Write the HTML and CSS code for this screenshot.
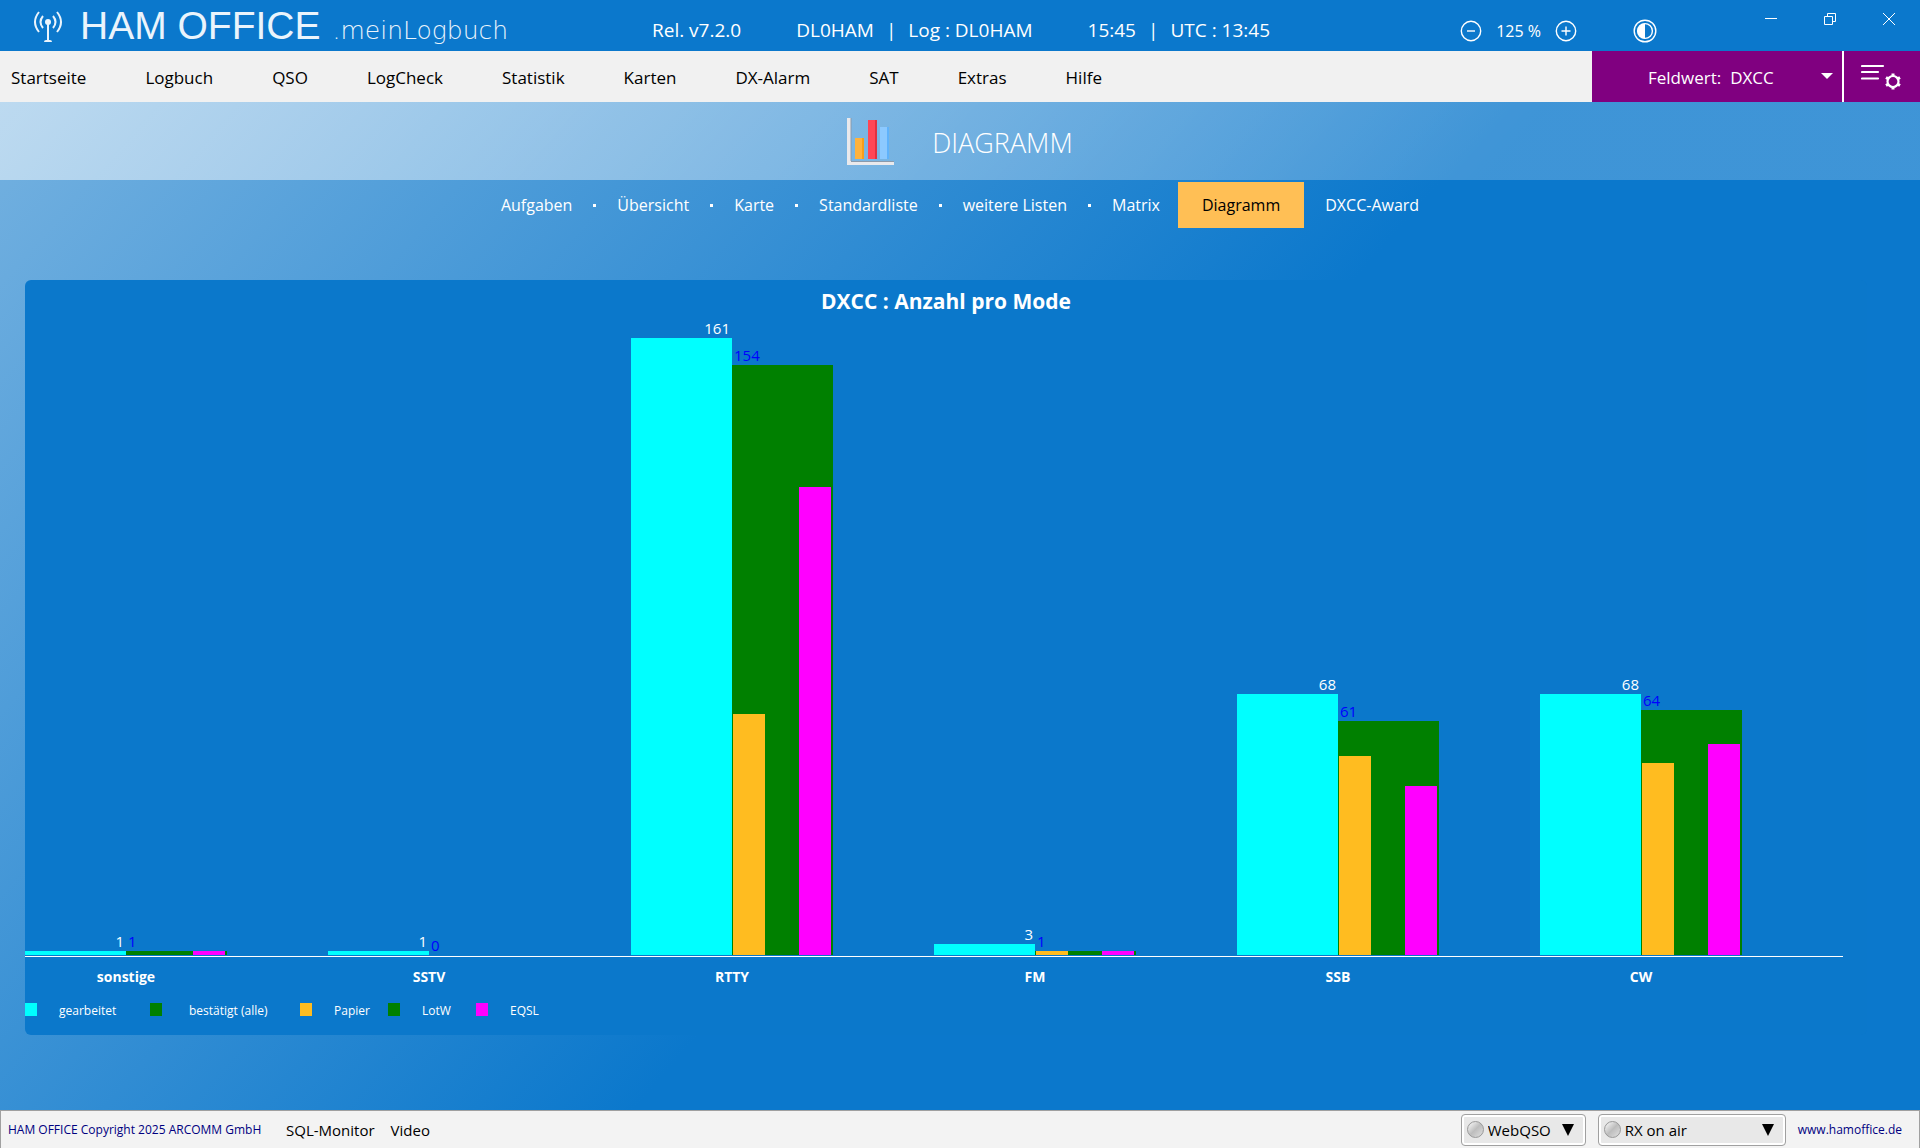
FILE: index.html
```html
<!DOCTYPE html>
<html lang="de">
<head>
<meta charset="utf-8">
<title>HAM OFFICE .meinLogbuch – Diagramm</title>
<meta name="viewport" content="width=device-width, initial-scale=1">
<link rel="stylesheet" href="styles.css">
</head>
<body>
<header class="topbar">
  <div class="brand">
    <svg class="brand-icon" viewBox="0 0 30 32" aria-hidden="true">
      <g fill="none" stroke="#eaf4fc" stroke-width="2">
        <path d="M6 1 Q-2 11 6 21"/>
        <path d="M10 5 Q5 11 10 17"/>
        <path d="M20 5 Q25 11 20 17"/>
        <path d="M24 1 Q32 11 24 21"/>
        <path d="M15 11 V29"/>
      </g>
      <circle cx="15" cy="11" r="3" fill="#eaf4fc"/>
      <path d="M11 31 Q11 29 13 29 H17 Q19 29 19 31 Z" fill="#eaf4fc"/>
    </svg>
    <span class="brand-name">HAM OFFICE</span>
    <span class="brand-sub">.meinLogbuch</span>
  </div>
  <div class="info">
    <span>Rel. v7.2.0</span>
    <span class="info-pair"><span>DL0HAM</span><span>|</span><span>Log : DL0HAM</span></span>
    <span class="info-pair"><span>15:45</span><span>|</span><span>UTC : 13:45</span></span>
  </div>
  <div class="tools">
    <div class="zoom">
      <button class="icon-btn" aria-label="Verkleinern"><svg width="22" height="22" viewBox="0 0 22 22" fill="none" stroke="#fff" stroke-width="1.4"><circle cx="11" cy="11" r="9.7"/><path d="M7 11h8"/></svg></button>
      <span>125 %</span>
      <button class="icon-btn" aria-label="Vergrößern"><svg width="22" height="22" viewBox="0 0 22 22" fill="none" stroke="#fff" stroke-width="1.4"><circle cx="11" cy="11" r="9.7"/><path d="M6.500 11h9M11 6.500v9"/></svg></button>
    </div>
    <button class="icon-btn" aria-label="Kontrast"><svg width="24" height="24" viewBox="0 0 24 24"><circle cx="12" cy="12" r="10.8" fill="none" stroke="#fff" stroke-width="1.4"/><circle cx="12" cy="12" r="7.4" fill="none" stroke="#fff" stroke-width="1.4"/><path d="M12 4.500a7.500 7.500 0 0 0 0 15z" fill="#fff"/></svg></button>
  </div>
  <div class="window-buttons">
    <button class="icon-btn" aria-label="Minimieren"><svg width="12" height="12" viewBox="0 0 12 12"><path d="M0 5.500h12" stroke="#fff"/></svg></button>
    <button class="icon-btn" aria-label="Wiederherstellen"><svg width="12" height="12" viewBox="0 0 12 12" fill="none" stroke="#fff"><path d="M.5 3.500h8v8h-8zM3.500 3.500v-3h8v8h-3"/></svg></button>
    <button class="icon-btn" aria-label="Schließen"><svg width="12" height="12" viewBox="0 0 12 12"><path d="M0 0l12 12M12 0L0 12" stroke="#fff"/></svg></button>
  </div>
</header>

<div class="menubar">
  <nav class="menu">
    <a href="#">Startseite</a><a href="#">Logbuch</a><a href="#">QSO</a><a href="#">LogCheck</a><a href="#">Statistik</a><a href="#">Karten</a><a href="#">DX-Alarm</a><a href="#">SAT</a><a href="#">Extras</a><a href="#">Hilfe</a>
  </nav>
  <div class="field">
    <label for="field-value">Feldwert:</label>
    <select id="field-value"><option>DXCC</option></select>
    <svg class="field-arrow" width="12" height="6" viewBox="0 0 12 6" aria-hidden="true"><path d="M0 0h12L6 6z" fill="#fff"/></svg>
  </div>
  <button class="settings" aria-label="Einstellungen">
    <svg width="40" height="26" viewBox="0 0 40 26" fill="none" stroke="#fff">
      <path d="M1 2h21M1 8h16M1 14.500h16" stroke-width="2.200" stroke-linecap="round"/>
      <circle cx="32" cy="17.500" r="5.500" stroke-width="2.200"/>
      <path d="M32 9.500v3M32 22.500v3M25 13.500l2.600 1.500M36.400 20l2.600 1.500M25 21.500l2.600-1.500M36.400 15l2.600-1.500" stroke-width="3"/>
    </svg>
  </button>
</div>

<main class="content">
  <div class="banner">
    <svg width="47" height="47" viewBox="0 0 47 47" aria-hidden="true">
      <path d="M0 0h4v43h43v4H0z" fill="#e9e9ec"/>
      <path d="M4 0v43M4 43.500h43" stroke="#8a9aac" fill="none"/>
      <path d="M8 20h7v21H8z" fill="#ffb23c"/><path d="M15 20h2v21h-2z" fill="#f79d19"/>
      <path d="M21 2h7v39h-7z" fill="#ff4655"/><path d="M28 2h2v39h-2z" fill="#e0303f"/>
      <path d="M33 9h7v32h-7z" fill="#8cc9ff"/><path d="M40 9h2v32h-2z" fill="#5fb2fb"/>
    </svg>
    <h1>DIAGRAMM</h1>
  </div>

  <nav class="tabs">
    <a href="#">Aufgaben</a><i class="dot"></i><a href="#">Übersicht</a><i class="dot"></i><a href="#">Karte</a><i class="dot"></i><a href="#">Standardliste</a><i class="dot"></i><a href="#">weitere Listen</a><i class="dot"></i><a href="#">Matrix</a><a href="#" class="active" aria-current="page">Diagramm</a><a href="#">DXCC-Award</a>
  </nav>

  <section class="panel">
    <h2>DXCC : Anzahl pro Mode</h2>
    <div class="chart">
      <div class="plot">
        <div class="group">
          <div class="col worked"><span>1</span><div class="bar" style="--v:1"></div></div>
          <div class="col confirmed"><span>1</span><div class="bar" style="--v:1"></div>
            <div class="parts"><div class="part paper" style="--v:0"></div><div class="part lotw" style="--v:1"></div><div class="part eqsl" style="--v:1"></div></div></div>
        </div>
        <div class="group">
          <div class="col worked"><span>1</span><div class="bar" style="--v:1"></div></div>
          <div class="col confirmed"><span>0</span><div class="bar" style="--v:0"></div></div>
        </div>
        <div class="group">
          <div class="col worked"><span>161</span><div class="bar" style="--v:161"></div></div>
          <div class="col confirmed"><span>154</span><div class="bar" style="--v:154"></div>
            <div class="parts"><div class="part paper" style="--v:63"></div><div class="part lotw" style="--v:122"></div><div class="part eqsl" style="--v:122"></div></div></div>
        </div>
        <div class="group">
          <div class="col worked"><span>3</span><div class="bar" style="--v:3"></div></div>
          <div class="col confirmed"><span>1</span><div class="bar" style="--v:1"></div>
            <div class="parts"><div class="part paper" style="--v:1"></div><div class="part lotw" style="--v:1"></div><div class="part eqsl" style="--v:1"></div></div></div>
        </div>
        <div class="group">
          <div class="col worked"><span>68</span><div class="bar" style="--v:68"></div></div>
          <div class="col confirmed"><span>61</span><div class="bar" style="--v:61"></div>
            <div class="parts"><div class="part paper" style="--v:52"></div><div class="part lotw" style="--v:44"></div><div class="part eqsl" style="--v:44"></div></div></div>
        </div>
        <div class="group">
          <div class="col worked"><span>68</span><div class="bar" style="--v:68"></div></div>
          <div class="col confirmed"><span>64</span><div class="bar" style="--v:64"></div>
            <div class="parts"><div class="part paper" style="--v:50"></div><div class="part lotw" style="--v:55"></div><div class="part eqsl" style="--v:55"></div></div></div>
        </div>
      </div>
      <div class="axis">
        <div><span>sonstige</span></div><div><span>SSTV</span></div><div><span>RTTY</span></div><div><span>FM</span></div><div><span>SSB</span></div><div><span>CW</span></div>
      </div>
    </div>
    <ul class="legend">
      <li><i class="swatch worked-color"></i>gearbeitet</li>
      <li class="wide"><i class="swatch confirmed-color"></i>bestätigt (alle)</li>
      <li><i class="swatch paper"></i>Papier</li>
      <li><i class="swatch lotw"></i>LotW</li>
      <li><i class="swatch eqsl"></i>EQSL</li>
    </ul>
  </section>
</main>

<footer class="statusbar">
  <span class="copyright">HAM OFFICE Copyright 2025 ARCOMM GmbH</span>
  <nav class="status-links"><a href="#">SQL-Monitor</a><a href="#">Video</a></nav>
  <div class="picker">
    <i class="led"></i>
    <select aria-label="WebQSO"><option>WebQSO</option></select>
    <svg width="12" height="12" viewBox="0 0 12 12" aria-hidden="true"><path d="M0 0h12L6 12z"/></svg>
  </div>
  <div class="picker picker-wide">
    <i class="led"></i>
    <select aria-label="RX on air"><option>RX on air</option></select>
    <svg width="12" height="12" viewBox="0 0 12 12" aria-hidden="true"><path d="M0 0h12L6 12z"/></svg>
  </div>
  <a class="site" href="#">www.hamoffice.de</a>
</footer>
</body>
</html>
```
FILE: styles.css
```css
* { box-sizing: border-box; }

:root {
  --blue: #0b78cc;
  --panel: #0b78cb;
  --menu: #f1f1f1;
  --purple: #800080;
}

body {
  margin: 0;
  min-height: 100vh;
  display: flex;
  flex-direction: column;
  font-family: "Open Sans", "Noto Sans", sans-serif;
  font-size: 17px;
  line-height: 24px;
  color: #fff;
  background: var(--blue);
}

a { color: inherit; text-decoration: none; }
h1, h2, ul { margin: 0; padding: 0; font-weight: 400; }
svg { display: block; flex: none; }

select {
  appearance: none;
  border: 0;
  padding: 0;
  background: transparent;
  font: inherit;
  color: inherit;
}

.icon-btn { border: 0; padding: 0; background: none; }

/* title bar */
.topbar {
  display: grid;
  grid-template-columns: 652px 1fr auto auto;
  height: 51px;
  background: var(--blue);
}
.brand {
  display: flex;
  align-items: baseline;
  padding-left: 33px;
  color: #eaf4fc;
  line-height: 52px;
  white-space: nowrap;
}
.brand-icon { width: 30px; height: 32px; align-self: flex-start; margin-top: 11px; }
.brand-name { margin-left: 17px; font-family: "Liberation Sans", Arial, sans-serif; font-size: 39px; }
.brand-sub { margin-left: 12px; font-family: "DejaVu Sans", sans-serif; font-size: 25px; font-weight: 200; }
.info {
  display: flex;
  gap: 55px;
  padding-top: 18px;
  font-size: 19px;
  white-space: nowrap;
}
.info-pair { display: flex; gap: 12px; }
.tools { display: flex; align-items: center; gap: 56px; padding-top: 4px; margin-right: 108px; }
.zoom { display: flex; align-items: center; gap: 14px; font-size: 16px; }
.window-buttons { display: flex; align-items: flex-start; gap: 47px; padding: 13px 25px 0 0; }

/* main menu */
.menubar { display: flex; height: 51px; background: var(--menu); color: #000; }
.menu { flex: 1; display: flex; align-items: center; gap: 59px; padding: 3px 0 0 11px; white-space: nowrap; }
.field {
  display: flex;
  align-items: center;
  width: 250px;
  padding: 3px 9px 0 56px;
  background: var(--purple);
  color: #fff;
}
.field select { flex: 1; margin-left: 9px; min-width: 0; }
.field-arrow { margin-bottom: 4px; }
.settings {
  width: 78px;
  padding: 0 0 0 17px;
  border: 0;
  border-left: 2px solid #fff;
  background: var(--purple);
}

/* page area */
.content {
  flex: 1;
  display: flex;
  flex-direction: column;
  background: linear-gradient(131deg, #74b1e0 0%, var(--blue) 54%);
}
.banner {
  display: flex;
  justify-content: center;
  align-items: center;
  gap: 38px;
  height: 78px;
  background: linear-gradient(131deg, rgba(255, 255, 255, .52) 0%, rgba(255, 255, 255, .21) 78%);
}
.banner h1 { font-size: 27px; font-weight: 300; line-height: 36px; padding-top: 4px; }
.tabs {
  display: flex;
  justify-content: center;
  align-items: center;
  gap: 21px;
  padding-top: 2px;
  font-size: 16px;
  white-space: nowrap;
}
.tabs a { line-height: 46px; }
.tabs .active { margin-left: -3px; padding: 0 24px; background: #ffbf55; color: #000; }
.dot { width: 3px; height: 3px; background: #fff; }

/* chart panel */
.panel {
  flex: 1;
  display: flex;
  flex-direction: column;
  margin: 52px 53px 75px 25px;
  padding-bottom: 14px;
  border-radius: 6px;
  background: var(--panel);
}
.panel h2 { padding-top: 6px; font-size: 21px; line-height: 30px; font-weight: 700; text-align: center; }
.chart { flex: 1; display: flex; flex-direction: column; margin: 22px 24px 0 0; }
.plot {
  flex: 1;
  display: grid;
  grid-template-columns: repeat(6, 1fr);
  min-height: 300px;
  padding-bottom: 1px;
  border-bottom: 1px solid #fff;
}
.group { display: grid; grid-template-columns: repeat(3, 1fr); }
.col { position: relative; display: flex; flex-direction: column; justify-content: flex-end; font-size: 15px; line-height: 20px; }
.col span { flex: none; }
.worked span { text-align: right; padding-right: 2px; }
.confirmed span { padding-left: 2px; color: #00f; }
.bar, .part { flex: none; height: calc(var(--v) / 161 * 100%); }
.worked .bar, .worked-color { background: #0ff; }
.confirmed .bar, .confirmed-color { background: green; }
/* confirmation sources drawn over the total bar */
.parts {
  position: absolute;
  inset: 0;
  display: flex;
  align-items: flex-end;
  gap: 1px;
  padding: 0 2px 0 1px;
}
.part { flex: 1; }
.paper { background: #ffbc20; }
.lotw { background: green; }
.eqsl { background: #f0f; }
.axis { display: grid; grid-template-columns: repeat(6, 1fr); padding-top: 10px; font-size: 14px; line-height: 20px; font-weight: 700; text-align: center; }
.axis span { display: block; width: calc(200% / 3); }

.legend {
  display: grid;
  grid-template-columns: 125px 150px 88px 88px auto;
  justify-content: start;
  margin-top: 14px;
  list-style: none;
  font-size: 12px;
  line-height: 20px;
}
.legend li { display: flex; align-items: flex-start; gap: 22px; white-space: nowrap; }
.legend .wide { gap: 27px; }
.swatch { width: 12px; height: 13px; margin-top: 2px; }

/* status bar */
.statusbar {
  display: flex;
  align-items: center;
  height: 38px;
  padding: 0 17px 0 7px;
  border: 1px solid #a0a0a0;
  border-bottom: 0;
  background: #f3f3f3;
  color: #000;
  font-size: 15px;
  white-space: nowrap;
}
.copyright, .site { font-size: 12px; color: #000080; }
.copyright { width: 278px; }
.status-links { flex: 1; display: flex; gap: 16px; }
.picker {
  display: flex;
  align-items: center;
  width: 125px;
  height: 32px;
  margin-right: 12px;
  padding: 0 11px 0 5px;
  border: 1px solid #a0a0a0;
  border-radius: 4px;
  background: #e8e8e8;
  box-shadow: inset 0 0 0 2px #fff;
}
.picker-wide { width: 188px; margin-right: 12px; }
.picker select { flex: 1; min-width: 0; margin-left: 4px; }
.led {
  width: 17px;
  height: 17px;
  border: 1px solid #999;
  border-radius: 50%;
  background: linear-gradient(135deg, #e4e4e4 20%, #bdbdbd 50%, #e0e0e0);
}
```
